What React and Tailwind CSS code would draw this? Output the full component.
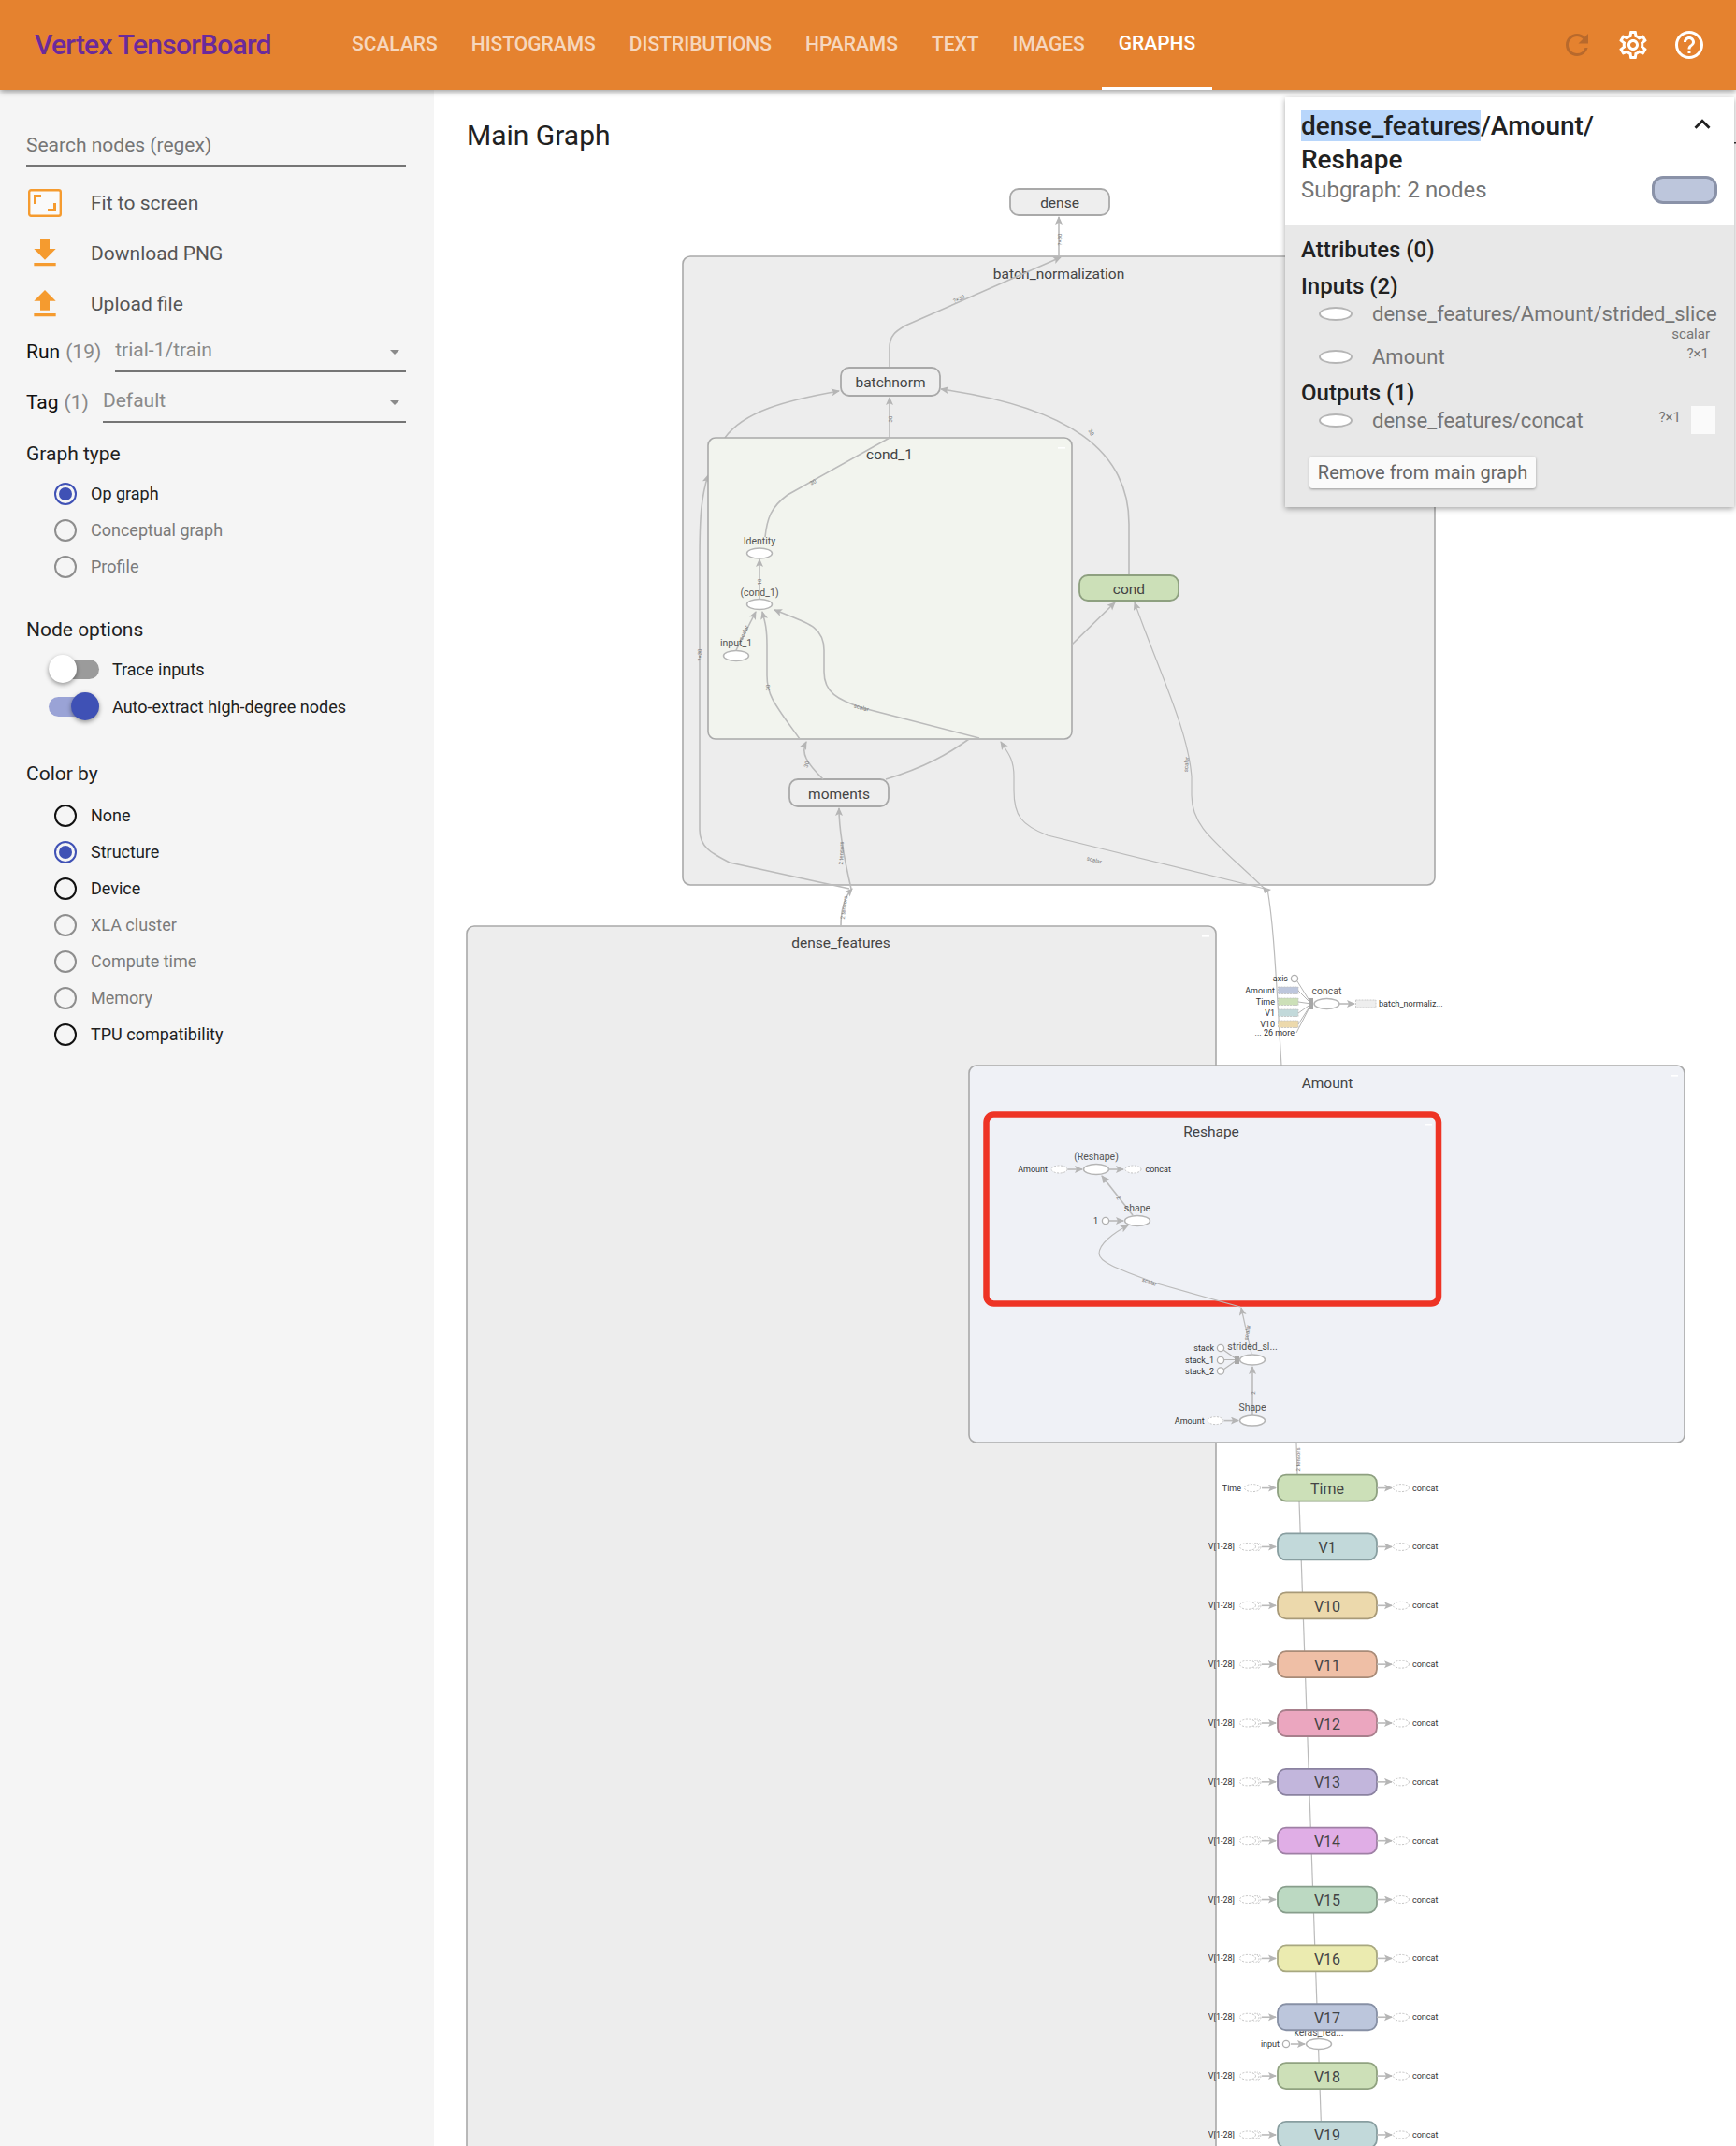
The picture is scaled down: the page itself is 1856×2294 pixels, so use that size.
import { MdRefresh, MdOutlineSettings, MdHelpOutline, MdExpandLess, MdArrowDropDown } from "react-icons/md";

const tabs = ["SCALARS", "HISTOGRAMS", "DISTRIBUTIONS", "HPARAMS", "TEXT", "IMAGES"];

function Radio({ label, checked, disabled }) {
  const ring = checked ? "border-[#3f51b5]" : disabled ? "border-[#8e8e8e]" : "border-[#111]";
  return (
    <div className="flex items-center h-[39px] ml-[30px] gap-[15px]">
      <div className={`w-[24px] h-[24px] rounded-full border-2 flex items-center justify-center ${ring}`}>
        {checked && <div className="w-[14px] h-[14px] rounded-full bg-[#3f51b5]" />}
      </div>
      <span className={`text-[18px] ${disabled ? "text-[#7b7b7b]" : "text-[#212121]"}`}>{label}</span>
    </div>
  );
}

function Toggle({ label, on }) {
  return (
    <div className="flex items-center h-[40px] ml-[24px] gap-[14px]">
      <div className={`relative w-[54px] h-[21px] rounded-full ${on ? "bg-[#9aa3d6]" : "bg-[#9b9b9b]"}`}>
        <div
          className={`absolute top-[-5px] w-[30px] h-[30px] rounded-full shadow-[0_2px_5px_rgba(0,0,0,0.4)] ${
            on ? "right-0 bg-[#3f51b5]" : "left-0 bg-white"
          }`}
        />
      </div>
      <span className="text-[18px] text-[#212121]">{label}</span>
    </div>
  );
}

function ActionRow({ icon, label }) {
  return (
    <div className="flex items-center h-[54px] gap-[29px]">
      <div className="w-[40px] h-[40px] flex items-center justify-center">{icon}</div>
      <span className="text-[21px] text-[#555] pt-[2px]">{label}</span>
    </div>
  );
}

function SelectRow({ name, count, value, className }) {
  return (
    <div className={`flex items-stretch h-[46px] ${className || ""}`}>
      <div className="flex items-center text-[21px] text-[#111] mr-[15px] pt-[4px]">
        {name}
        <span className="text-[#888] ml-[6px]">({count})</span>
      </div>
      <div className="flex-1 flex items-center justify-between border-b-2 border-[#757575] text-[21px] text-[#8a8a8a] pt-[2px]">
        {value}
        <MdArrowDropDown className="text-[#8a8a8a] text-[24px] mt-[2px]" />
      </div>
    </div>
  );
}

function Sidebar() {
  return (
    <aside className="w-[464px] shrink-0 bg-[#f5f5f5] px-[28px] pr-[30px] h-[2198px]">
      <div className="mt-[40px] h-[42px] border-b-2 border-[#757575] text-[21px] text-[#757575] flex items-center pb-[2px] pt-[2px]">
        Search nodes (regex)
      </div>
      <div className="mt-[12px]">
        <ActionRow
          label="Fit to screen"
          icon={
            <svg width="36" height="30" viewBox="0 0 36 30">
              <rect x="1.2" y="1.2" width="33.6" height="27.6" rx="2" fill="#fafafa" stroke="#f59b2f" strokeWidth="2.4" />
              <path d="M6 6h8v3h-5v7H6zM30 24h-9v-3h6v-6h3z" fill="#f59b2f" />
            </svg>
          }
        />
        <ActionRow
          label="Download PNG"
          icon={
            <svg width="40" height="40" viewBox="0 0 24 24">
              <path d="M19 9h-4V3H9v6H5l7 7 7-7zM5 18v2h14v-2H5z" fill="#f59b2f" />
            </svg>
          }
        />
        <ActionRow
          label="Upload file"
          icon={
            <svg width="40" height="40" viewBox="0 0 24 24">
              <path d="M9 16h6v-6h4l-7-7-7 7h4zm-4 2h14v2H5z" fill="#f59b2f" />
            </svg>
          }
        />
      </div>
      <SelectRow name="Run" count="19" value="trial-1/train" />
      <SelectRow name="Tag" count="1" value="Default" className="mt-[8px]" />

      <div className="mt-[21px] h-[24px] flex items-center text-[21px] text-[#212121] pt-[2px]">Graph type</div>
      <div className="mt-[11px]">
        <Radio label="Op graph" checked />
        <Radio label="Conceptual graph" disabled />
        <Radio label="Profile" disabled />
      </div>

      <div className="mt-[36px] h-[24px] flex items-center text-[21px] text-[#212121] pt-[2px]">Node options</div>
      <div className="mt-[10px]">
        <Toggle label="Trace inputs" />
        <Toggle label="Auto-extract high-degree nodes" on />
      </div>

      <div className="mt-[40px] h-[24px] flex items-center text-[21px] text-[#212121] pt-[2px]">Color by</div>
      <div className="mt-[13px]">
        <Radio label="None" />
        <Radio label="Structure" checked />
        <Radio label="Device" />
        <Radio label="XLA cluster" disabled />
        <Radio label="Compute time" disabled />
        <Radio label="Memory" disabled />
        <Radio label="TPU compatibility" />
      </div>
    </aside>
  );
}

function Ellipse() {
  return <div className="ml-[19px] w-[36px] h-[15px] shrink-0 rounded-[50%] bg-white border-2 border-[#b5b5b5]" />;
}

function InfoCard() {
  return (
    <div className="absolute top-[8px] right-[2px] w-[480px] shadow-[0_2px_6px_rgba(0,0,0,0.35)] z-10">
      <div className="bg-white pl-[17px] pr-[17px] pt-[12px] h-[136px]">
        <div className="flex justify-between">
          <div className="text-[28px] leading-[36px] font-medium text-[#212121] pt-[1px]">
            <span className="bg-[#b8d6fb]">dense_features</span>/Amount/
            <br />
            Reshape
          </div>
          <MdExpandLess className="text-[34px] text-[#212121]" />
        </div>
        <div className="flex items-center justify-between h-[30px] mt-[-1px]">
          <span className="text-[24px] text-[#757575]">Subgraph: 2 nodes</span>
          <div className="w-[70px] h-[30px] rounded-[12px] bg-[#bdc6dc] border-[3px] border-[#8a92a8] mr-[1px]" />
        </div>
      </div>
      <div className="bg-[#e8e8e8] pl-[17px] pr-[18px] pt-[12px] pb-[20px]">
        <div className="h-[30px] flex items-center text-[24px] font-medium text-[#212121]">Attributes (0)</div>
        <div className="mt-[9px] h-[30px] flex items-center text-[24px] font-medium text-[#212121]">Inputs (2)</div>
        <div className="h-[28px] flex items-center gap-[21px] text-[22px] text-[#757575] whitespace-nowrap">
          <Ellipse />
          dense_features/Amount/strided_slice
        </div>
        <div className="h-[16px] flex items-center justify-end pr-[8px] text-[15px] text-[#757575]">scalar</div>
        <div className="h-[32px] flex items-center gap-[21px] text-[22px] text-[#757575]">
          <Ellipse />
          Amount
          <span className="ml-auto mr-[9px] mb-[6px] text-[15px]">?×1</span>
        </div>
        <div className="mt-[8px] h-[30px] flex items-center text-[24px] font-medium text-[#212121]">Outputs (1)</div>
        <div className="h-[28px] flex items-center gap-[21px] text-[22px] text-[#757575]">
          <Ellipse />
          dense_features/concat
          <span className="ml-auto mb-[6px] mr-[-10px] text-[15px]">?×1</span>
          <div className="w-[26px] h-[30px] bg-[#fafafa] shrink-0 mr-[2px]" />
        </div>
        <div className="mt-[25px] ml-[9px] w-[242px] h-[34px] rounded-[3px] bg-[#fafafa] shadow-[0_1px_3px_rgba(0,0,0,0.35)] flex items-center justify-center text-[20px] text-[#666]">
          Remove from main graph
        </div>
      </div>
    </div>
  );
}

// drawing helpers, all coordinates are page pixels
const EDGE = "#bbbbbb";

function Edge({ d, w = 1.6, arrow = true }) {
  return <path d={d} fill="none" stroke={EDGE} strokeWidth={w} markerEnd={arrow ? "url(#arrow)" : undefined} />;
}

function Label({ x, y, size = 11, anchor = "middle", fill = "#444", children }) {
  return (
    <text x={x} y={y} fontSize={size} textAnchor={anchor} dominantBaseline="central" fill={fill}>
      {children}
    </text>
  );
}

function Tiny({ x, y, rot = 0, children }) {
  return (
    <text x={x} y={y} fontSize="6" textAnchor="middle" dominantBaseline="central" fill="#777" transform={`rotate(${rot} ${x} ${y})`}>
      {children}
    </text>
  );
}

function Group({ x, y, w, h, fill = "#ededed", label, lx, ly, dash = true }) {
  return (
    <g>
      <rect x={x} y={y} width={w} height={h} rx="8" fill={fill} stroke="#a9a9a9" strokeWidth="1.6" />
      {dash && <rect x={x + w - 15} y={y + 10} width="8" height="1.6" fill="#fff" />}
      <Label x={lx} y={ly + 1} size={15.5}>{label}</Label>
    </g>
  );
}

function Node({ x, y, w = 106, h = 29, fill = "#eeeeee", stroke = "#a9a9a9", label, size = 15.5 }) {
  return (
    <g>
      <rect x={x} y={y} width={w} height={h} rx="9" fill={fill} stroke={stroke} strokeWidth="1.8" />
      <Label x={x + w / 2} y={y + h / 2 + 1} size={size}>{label}</Label>
    </g>
  );
}

function Op({ x, y, label, ly, size = 10.5 }) {
  return (
    <g>
      <ellipse cx={x} cy={y} rx="13.5" ry="5.5" fill="#fff" stroke="#b5b5b5" strokeWidth="1.5" />
      {label && <Label x={x} y={ly ?? y - 14} size={size} fill="#555">{label}</Label>}
    </g>
  );
}

function Ghost({ x, y, rx = 8.5 }) {
  return <ellipse cx={x} cy={y} rx={rx} ry="4" fill="#fff" stroke="#c4c4c4" strokeWidth="1" strokeDasharray="2 1.5" />;
}

function Const({ x, y }) {
  return <circle cx={x} cy={y} r="3.6" fill="#fff" stroke="#b0b0b0" strokeWidth="1.3" />;
}

const features = [
  ["Time", "#cce0b8", "#8ea080"],
  ["V1", "#c2d9da", "#889ea0"],
  ["V10", "#ecd9ac", "#a89a78"],
  ["V11", "#efbfa6", "#a88b78"],
  ["V12", "#eba6bf", "#a87f8c"],
  ["V13", "#c2b6dc", "#8a82a0"],
  ["V14", "#e0aee6", "#9f80a5"],
  ["V15", "#bcd9c2", "#889e8c"],
  ["V16", "#ebebb0", "#a8a880"],
  ["V17", "#bcc6dc", "#8790a5"],
  ["V18", "#cde0b8", "#90a280"],
  ["V19", "#c2d9da", "#889ea0"],
];

function FeatureRow({ name, fill, stroke, cy, first }) {
  return (
    <g>
      {first ? (
        <>
          <Label x={1327} y={cy} size={9} anchor="end" fill="#333">Time</Label>
          <Ghost x={1339} y={cy} />
        </>
      ) : (
        <>
          <Label x={1320} y={cy} size={9} anchor="end" fill="#333">V[1-28]</Label>
          <Ghost x={1345} y={cy} rx={3} />
          <Ghost x={1342} y={cy} rx={4} />
          <Ghost x={1334} y={cy} />
        </>
      )}
      <Edge d={`M1349 ${cy}H1364`} />
      <Node x={1366} y={cy - 14} h={28} fill={fill} stroke={stroke} label={name} size={16} />
      <Edge d={`M1472 ${cy}H1488`} />
      <Ghost x={1498} y={cy} />
      <Label x={1510} y={cy} size={9} anchor="start" fill="#333">concat</Label>
    </g>
  );
}

function Graph() {
  const spine = [];
  for (let i = 0; i < 11; i++) {
    const top = 1590.6 + 62.85 * i + 14;
    spine.push(<Edge key={i} d={`M${1389 + 0.0352 * (top - 1605)} ${top}L${1389 + 0.0352 * (top + 35 - 1605)} ${top + 35}`} w={1.2} arrow={false} />);
  }
  return (
    <svg className="absolute inset-0 block" width="1392" height="2198" viewBox="464 96 1392 2198" fontFamily="Roboto, sans-serif">
      <defs>
        <marker id="arrow" markerWidth="10" markerHeight="10" refX="8" refY="4" orient="auto" markerUnits="userSpaceOnUse">
          <path d="M0 0L9 4L0 8L2 4z" fill="#b5b5b5" />
        </marker>
      </defs>

      {/* top of the graph */}
      <Node x={1080} y={202} h={28} label="dense" />
      <rect x="1854" y="152" width="2" height="1.5" fill="#333" />
      <Group x={730} y={274} w={804} h={672} label="batch_normalization" lx={1132} ly={292} dash={false} />
      <Edge d="M1132 274V232" />
      <Tiny x={1132} y={256} rot={-90}>?×30</Tiny>
      <Edge d="M951 393V372C951 358 958 354 968 348L1134 275" arrow={true} />
      <Tiny x={1025} y={319} rot={-24}>?×30</Tiny>
      <Edge d="M775 468C795 440 840 428 897 418" />
      <Edge d="M748 887V600C748 550 750 530 757 508" />
      <Edge d="M748 887C748 905 760 912 780 922L908 950" arrow={false} />
      <Tiny x={747} y={700} rot={-90}>?×30</Tiny>
      <Edge d="M1207 615V560C1207 480 1140 435 1006 416" />
      <Tiny x={1167} y={462} rot={60}>30</Tiny>
      <Node x={899} y={393} h={30} label="batchnorm" />
      <Edge d="M951 468V425" />
      <Tiny x={951} y={448} rot={-90}>30</Tiny>

      <Group x={757} y={468} w={389} h={322} fill="#f2f4ee" label="cond_1" lx={951} ly={485} />
      <Edge d="M818 574C820 555 824 542 842 529L951 468" arrow={false} />
      <Tiny x={869} y={515} rot={-30}>30</Tiny>
      <Edge d="M812 640V598" />
      <Tiny x={811} y={622} rot={-90}>10</Tiny>
      <Edge d="M787 695L808 654" />
      <Tiny x={795} y={676} rot={-65}>scalar</Tiny>
      <Edge d="M855 790C830 755 820 745 820 722V690C820 672 818 665 815 654" />
      <Tiny x={820} y={735} rot={-90}>30</Tiny>
      <Edge d="M1047 789L923 757C895 748 881 740 881 718V695C881 668 860 665 828 652" />
      <Tiny x={921} y={756} rot={15}>scalar</Tiny>
      <Op x={812} y={591.5} label="Identity" ly={578} />
      <Op x={812} y={646} label="(cond_1)" ly={633} />
      <Op x={787} y={701} label="input_1" ly={687} />

      <Edge d="M1146 689L1192 644" />
      <Node x={1154} y={615} h={27} fill="#cce0b8" stroke="#8ea080" label="cond" />
      <Edge d="M1352 950C1300 900 1274 885 1274 850V830C1270 780 1240 720 1213 644" w={1.2} />
      <Tiny x={1268} y={817} rot={-85}>scalar</Tiny>
      <Node x={844} y={833} h={29} label="moments" />
      <Edge d="M880 833C862 815 856 805 862 793" />
      <Tiny x={862} y={817} rot={-70}>30</Tiny>
      <Edge d="M947 833C990 820 1015 805 1036 790" arrow={false} />
      <Edge d="M1352 950L1120 893C1092 882 1084 872 1084 845V830C1084 812 1078 805 1070 793" w={1.2} />
      <Tiny x={1170} y={919} rot={15}>scalar</Tiny>
      <Edge d="M910 950C903 920 897 890 897 864" />
      <Tiny x={899} y={912} rot={-88}>2 tensors</Tiny>

      {/* dense_features */}
      <Group x={499} y={990} w={801} h={1400} label="dense_features" lx={899} ly={1007} />
      <Edge d="M899 990C899 975 902 960 911 950" />
      <Tiny x={902} y={970} rot={-82}>2 tensors</Tiny>
      <path d="M1350 948L1359 951L1352 955z" fill="#b5b5b5" />
      <Edge d="M1355 950C1360 980 1362 1000 1370 1139" w={1.2} arrow={false} />

      {/* concat */}
      <g>
        <path d="M1387 1049L1402 1073M1388 1059L1402 1073M1388 1071L1402 1073M1388 1083L1402 1073M1388 1095L1402 1073M1386 1104L1402 1073" stroke="#b5b5b5" strokeWidth="1" fill="none" />
        <rect x="1399" y="1067" width="5" height="12" fill="#a8a8a8" />
        <Label x={1377} y={1046} size={9} anchor="end" fill="#333">axis</Label>
        <Const x={1384} y={1046} />
        <Label x={1363} y={1059} size={9} anchor="end" fill="#333">Amount</Label>
        <rect x="1366.5" y="1055" width="21.5" height="7.5" fill="#bdc6dc" stroke="#c0c0c0" strokeWidth="0.8" strokeDasharray="2 1" />
        <Label x={1363} y={1071} size={9} anchor="end" fill="#333">Time</Label>
        <rect x="1366.5" y="1067" width="21.5" height="7.5" fill="#cce0b8" stroke="#c0c0c0" strokeWidth="0.8" strokeDasharray="2 1" />
        <Label x={1363} y={1083} size={9} anchor="end" fill="#333">V1</Label>
        <rect x="1366.5" y="1079" width="21.5" height="7.5" fill="#c2d9da" stroke="#c0c0c0" strokeWidth="0.8" strokeDasharray="2 1" />
        <Label x={1363} y={1095} size={9} anchor="end" fill="#333">V10</Label>
        <rect x="1366.5" y="1091" width="21.5" height="7.5" fill="#ecd9ac" stroke="#c0c0c0" strokeWidth="0.8" strokeDasharray="2 1" />
        <Label x={1384} y={1104} size={9} anchor="end" fill="#333">... 26 more</Label>
        <Op x={1418.5} y={1073} label="concat" ly={1059} />
        <Edge d="M1432 1073H1448" />
        <rect x="1449.5" y="1069" width="21.5" height="8" fill="#eeeeee" stroke="#c0c0c0" strokeWidth="0.8" strokeDasharray="2 1" />
        <Label x={1474} y={1073} size={9} anchor="start" fill="#333">batch_normaliz...</Label>
      </g>

      {/* Amount */}
      <Group x={1036} y={1139} w={765} h={403} fill="#eff1f6" label="Amount" lx={1419} ly={1157} />
      <rect x="1054.5" y="1191.5" width="483.5" height="202" rx="8" fill="#eff1f6" stroke="#ee3425" strokeWidth="6.5" />
      <rect x="1523" y="1202" width="8" height="1.5" fill="#fff" />
      <Label x={1295} y={1210} size={15.5}>Reshape</Label>
      <Label x={1120} y={1250} size={9} anchor="end" fill="#333">Amount</Label>
      <Ghost x={1132.6} y={1250} />
      <Edge d="M1141.5 1250H1157" />
      <Op x={1172} y={1250} label="(Reshape)" ly={1236} />
      <Edge d="M1186 1250H1201" />
      <Ghost x={1211.5} y={1250} />
      <Label x={1224.5} y={1250} size={9} anchor="start" fill="#333">concat</Label>
      <Edge d="M1211 1299L1178 1257" />
      <Tiny x={1196} y={1280} rot={50}>2</Tiny>
      <Label x={1174} y={1305} size={9} anchor="end" fill="#333">1</Label>
      <Const x={1182} y={1305} />
      <Edge d="M1186 1305H1201" />
      <Op x={1216} y={1305} label="shape" ly={1291} />
      <Edge d="M1326 1397L1237 1372C1200 1358 1175 1350 1175 1340C1175 1330 1190 1318 1206 1310" w={1.2} />
      <Tiny x={1229} y={1370} rot={20}>scalar</Tiny>
      <Edge d="M1338 1447L1327 1398" w={1.2} />
      <Tiny x={1333} y={1424} rot={-80}>scalar</Tiny>
      <Label x={1298} y={1441} size={9} anchor="end" fill="#333">stack</Label>
      <Const x={1305} y={1441} />
      <Label x={1298} y={1454} size={9} anchor="end" fill="#333">stack_1</Label>
      <Const x={1305} y={1454} />
      <Label x={1298} y={1465.5} size={9} anchor="end" fill="#333">stack_2</Label>
      <Const x={1305} y={1465.5} />
      <path d="M1308 1443L1323 1453.5M1309 1453.5H1323M1308 1464L1323 1453.5" stroke="#b5b5b5" strokeWidth="1.2" fill="none" />
      <rect x="1320" y="1449" width="5" height="9" fill="#a8a8a8" />
      <Op x={1339} y={1453.5} label="strided_sl..." ly={1439.5} />
      <Edge d="M1339 1513V1461" />
      <Tiny x={1339} y={1489} rot={-90}>2</Tiny>
      <Label x={1287.6} y={1518.6} size={9} anchor="end" fill="#333">Amount</Label>
      <Ghost x={1299.6} y={1518.6} />
      <Edge d="M1309 1518.6H1324" />
      <Op x={1339} y={1518.6} label="Shape" ly={1504.5} />

      {/* feature columns */}
      <Edge d="M1386 1542L1387 1577" w={1.2} arrow={false} />
      <Tiny x={1387} y={1560} rot={-90}>2 tensors</Tiny>
      {spine}
      <Op x={1410} y={2185} label="keras_fea..." ly={2172} />
      <Label x={1368} y={2185} size={9} anchor="end" fill="#333">input</Label>
      <Const x={1375} y={2185} />
      <Edge d="M1380 2185H1395" />
      {features.map(([name, fill, stroke], i) => (
        <FeatureRow key={name} name={name} fill={fill} stroke={stroke} cy={1590.6 + 62.85 * i} first={i === 0} />
      ))}
    </svg>
  );
}

export default function App() {
  return (
    <div className="w-[1856px] h-[2294px] overflow-hidden bg-white font-['Roboto',sans-serif]">
      <header className="relative z-20 h-[96px] bg-[#e5822f] shadow-[0_2px_6px_rgba(0,0,0,0.4)] flex items-center">
        <div className="w-[358px] pl-[37px] pb-[2px] text-[30px] font-medium tracking-[-0.75px] text-[#6b2a9b]">Vertex TensorBoard</div>
        <nav className="flex h-full">
          {tabs.map((t) => (
            <div key={t} className="px-[18px] flex items-center text-[21px] font-medium text-white/70">
              {t}
            </div>
          ))}
          <div className="px-[18px] flex items-center text-[21px] font-medium text-white border-b-[3px] border-white">GRAPHS</div>
        </nav>
        <div className="ml-auto flex items-center gap-[24px] pr-[32px]">
          <MdRefresh className="text-[36px] text-[#b8692c]" />
          <MdOutlineSettings className="text-[36px] text-white" />
          <MdHelpOutline className="text-[36px] text-white" />
        </div>
      </header>
      <div className="flex">
        <Sidebar />
        <main className="relative flex-1 h-[2198px] overflow-hidden">
          <Graph />
          <h1 className="absolute left-[35px] top-[26px] text-[30px] text-[#212121] font-normal">Main Graph</h1>
          <InfoCard />
        </main>
      </div>
    </div>
  );
}
